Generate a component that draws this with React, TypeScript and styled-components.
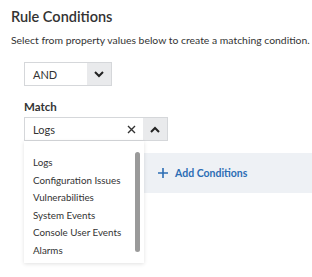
import React from 'react'
import styled, { createGlobalStyle } from 'styled-components'

const GlobalStyle = createGlobalStyle`
  body {
    margin: 0;
    background: #fff;
    font-family: 'Lato', 'Liberation Sans', sans-serif;
    color: #333;
  }
`

const Page = styled.div`
  width: 312px;
  height: 277px;
  overflow: hidden;
  padding: 8px 0 0 11px;
  box-sizing: border-box;
`

const Title = styled.h2`
  margin: 0;
  font-size: 14.5px;
  line-height: 18px;
  font-weight: 600;
  color: #333;
`

const Subtitle = styled.p`
  margin: 7px 0 0;
  font-size: 10.4px;
  line-height: 14px;
  color: #333;
  white-space: nowrap;
`

const Body = styled.div`
  margin-top: 15px;
  padding-left: 13px;
`

const Select = styled.div<{ $width: number }>`
  display: flex;
  width: ${p => p.$width}px;
  height: 24px;
  box-sizing: border-box;
  border: 1px solid #d5d7da;
  background: #fff;
  font-size: 11px;
`

const Value = styled.div`
  flex: 1;
  display: flex;
  align-items: center;
  padding-left: 8px;
`

const ClearBtn = styled.div`
  width: 24px;
  display: flex;
  align-items: center;
  justify-content: center;
  color: #444;
`

const Toggle = styled.div`
  width: 24px;
  display: flex;
  align-items: center;
  justify-content: center;
  background: #e9eaec;
`

const Label = styled.div`
  margin-top: 14px;
  font-size: 11.5px;
  font-weight: 700;
  line-height: 14px;
`

const MatchWrap = styled.div`
  position: relative;
  margin-top: 3px;
`

const Menu = styled.div`
  position: absolute;
  top: 24px;
  left: 0;
  width: 120px;
  height: 122px;
  box-sizing: border-box;
  background: #fff;
  box-shadow: 0 1px 4px rgba(0, 0, 0, 0.12);
  padding: 13px 0 0 9px;
  z-index: 2;
`

const MenuItem = styled.div`
  font-size: 9.8px;
  line-height: 17.6px;
  color: #333;
  white-space: nowrap;
`

const ScrollThumb = styled.div`
  position: absolute;
  top: 11px;
  right: 4px;
  width: 5px;
  height: 100px;
  border-radius: 3px;
  background: #9a9a9a;
`

const AddBar = styled.div`
  margin-top: 12px;
  margin-right: -20px;
  height: 40px;
  background: #eef1f5;
  display: flex;
  align-items: center;
  padding-left: 134px;
  gap: 7px;
  color: #2c6db4;
  font-size: 10.5px;
  font-weight: 700;
`

const Chevron = ({ up }: { up?: boolean }) => (
  <svg width="10" height="7" viewBox="0 0 10 7">
    <path
      d={up ? 'M1 6 L5 2 L9 6' : 'M1 1 L5 5 L9 1'}
      fill="none"
      stroke="#222"
      strokeWidth="2"
    />
  </svg>
)

const options = [
  'Logs',
  'Configuration Issues',
  'Vulnerabilities',
  'System Events',
  'Console User Events',
  'Alarms',
]

export default function App() {
  return (
    <Page>
      <GlobalStyle />
      <Title>Rule Conditions</Title>
      <Subtitle>Select from property values below to create a matching condition.</Subtitle>
      <Body>
        <Select $width={88}>
          <Value>AND</Value>
          <Toggle><Chevron /></Toggle>
        </Select>
        <Label>Match</Label>
        <MatchWrap>
          <Select $width={144}>
            <Value>Logs</Value>
            <ClearBtn>
              <svg width="9" height="9" viewBox="0 0 9 9">
                <path d="M1 1 L8 8 M8 1 L1 8" stroke="#333" strokeWidth="1.4" />
              </svg>
            </ClearBtn>
            <Toggle><Chevron up /></Toggle>
          </Select>
          <Menu>
            {options.map(o => (
              <MenuItem key={o}>{o}</MenuItem>
            ))}
            <ScrollThumb />
          </Menu>
        </MatchWrap>
        <AddBar>
          <svg width="10" height="10" viewBox="0 0 10 10">
            <path d="M5 0 V10 M0 5 H10" stroke="#2c6db4" strokeWidth="1.6" />
          </svg>
          Add Conditions
        </AddBar>
      </Body>
    </Page>
  )
}
